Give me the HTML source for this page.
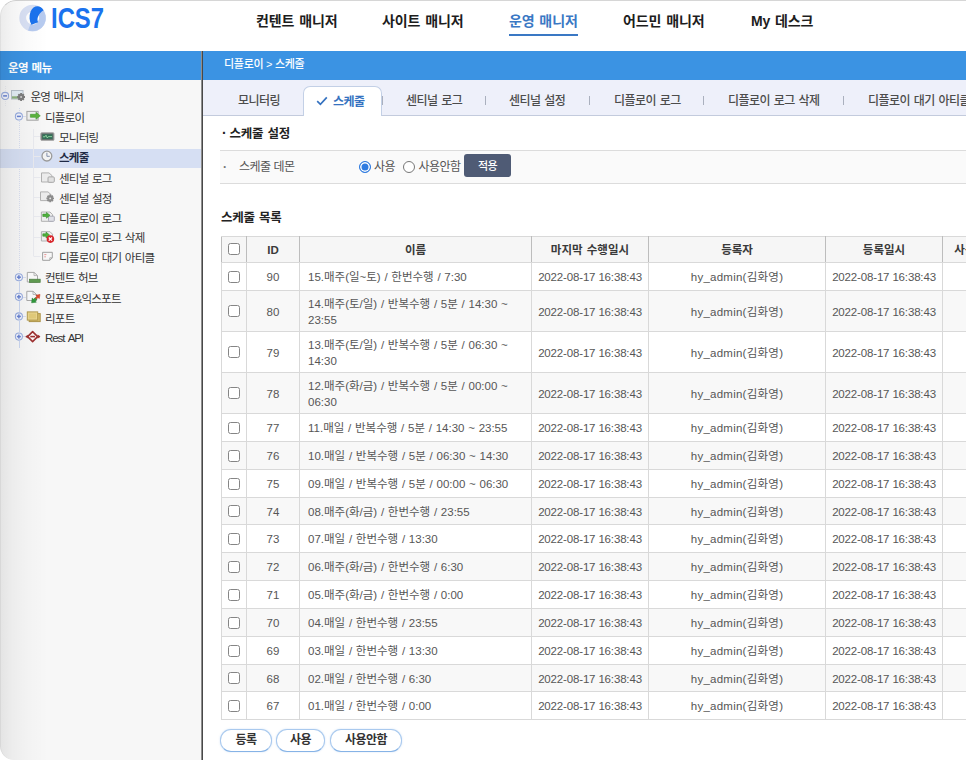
<!DOCTYPE html>
<html lang="ko">
<head>
<meta charset="utf-8">
<title>ICS7 운영 매니저 - 스케줄</title>
<style>
*{box-sizing:border-box}
html,body{margin:0;padding:0}
body{width:966px;height:760px;overflow:hidden;background:#fff;position:relative;
  font-family:"Liberation Sans","Noto Sans CJK KR",sans-serif;font-size:12px;color:#444}
.abs{position:absolute}
#frame{position:absolute;left:0;top:0;width:1100px;height:760px;overflow:hidden;
  border-radius:16px 0 0 14px;background:#fff}
#topline{left:0;top:0;width:1100px;height:760px;border:1px solid #d6d6d6;border-left-color:rgba(0,0,0,.05);border-bottom:none;border-right:none;border-radius:16px 0 0 14px;pointer-events:none}
/* header */
#hdr{left:0;top:0;width:1100px;height:51px;background:#fff}
#logotxt{left:51px;top:0;height:36px;line-height:35px;font-size:30px;font-weight:bold;color:#1b73ee;
  transform-origin:0 50%;transform:scaleX(.795);letter-spacing:0}
.nav{top:8px;height:26px;line-height:26px;font-size:14px;font-weight:bold;color:#1d1d1d;white-space:nowrap;letter-spacing:-.1px;word-spacing:1px}
.nav.on{color:#3a78c4}
#navline{left:509px;top:34px;width:69px;height:2px;background:#3a78c4}
/* blue bar */
#bar{left:0;top:51px;width:1100px;height:29px;background:#3b93e3}
#bar .t1{left:8px;top:2.5px;line-height:29px;color:#fff;font-weight:bold;font-size:11.5px;letter-spacing:-.6px;word-spacing:1px}
#bar .t2{left:224px;top:0;line-height:27px;color:#fff;font-size:11px;font-weight:500;letter-spacing:-.3px}
/* sidebar */
#side{left:0;top:80px;width:201px;height:680px;background:#f7f7f7}
#divider{left:201px;top:51px;width:2px;height:709px;background:linear-gradient(to right,#8e8e8e,#8e8e8e 50%,#484848 50%,#484848)}
#lgrad{left:0;top:0;width:48px;height:760px;background:linear-gradient(to right,rgba(0,0,0,.08),rgba(0,0,0,.045) 25%,rgba(0,0,0,.018) 55%,rgba(0,0,0,0));pointer-events:none}
.tr{position:absolute;left:0;width:201px;height:20px;line-height:20px;font-size:11.5px;color:#333;white-space:nowrap;letter-spacing:-.75px;word-spacing:1px}
.tr.sel{background:#d6dff3;font-weight:bold;color:#1f2a44}
.tr span.tx{position:absolute;top:0}
.ov{position:absolute;left:0;top:0}
.dl{position:absolute;width:1px;background:repeating-linear-gradient(to bottom,#dde1ec 0,#dde1ec 1px,transparent 1px,transparent 2px)}
.hl{position:absolute;height:1px;background:repeating-linear-gradient(to right,#dde1ec 0,#dde1ec 1px,transparent 1px,transparent 2px)}
/* content */
#tabs{left:203px;top:80px;width:900px;height:36px;background:#eef0fa;border-bottom:1px solid #c3cbdd}
.tab{position:absolute;top:90px;height:22px;line-height:22px;font-size:12px;font-weight:500;color:#4c4c4c;white-space:nowrap;letter-spacing:-.55px;word-spacing:1px}
.sep{position:absolute;top:96px;width:1px;height:9px;background:#aab0be}
#tabon{left:303px;top:86px;width:79px;height:30px;background:#fff;border:1px solid #c3d0e6;border-bottom:none;border-radius:7px 7px 0 0}
#tabon .t{position:absolute;left:29px;top:4px;line-height:22px;font-weight:bold;color:#3572c0;font-size:12px;letter-spacing:-.5px}
.h3{position:absolute;font-weight:bold;color:#222;font-size:12.5px;line-height:20px;white-space:nowrap;letter-spacing:-.25px;word-spacing:1px}
#form{left:220px;top:150px;width:800px;height:34px;background:#fafafa;border-top:1px solid #dcdcdc;border-bottom:1px solid #dcdcdc}
.radio{position:absolute;width:12px;height:12px;border-radius:50%;border:1px solid #777;background:#fff}
.radio.on{border:1.5px solid #2f7be0;background:#2f7be0;box-shadow:inset 0 0 0 1.5px #fff}
.lbl{position:absolute;line-height:20px;font-size:12px;color:#555;white-space:nowrap;letter-spacing:-.5px}
#apply{left:464px;top:154px;width:47px;height:23px;background:#4f5b75;border-radius:3px;color:#fff;font-size:11px;font-weight:500;line-height:25px;text-align:center;letter-spacing:-.5px}
/* table */
#tbl{position:absolute;left:221px;top:236px;border-collapse:collapse;table-layout:fixed;width:787px;font-size:11.5px;color:#565656;letter-spacing:0}
#tbl th,#tbl td{border:1px solid #d9d9d9;padding:1px 0 0 0;vertical-align:middle;overflow:hidden;line-height:16px}
#tbl td.u{letter-spacing:.25px}
#tbl{border:1px solid #bdbdbd}
#tbl th{font-weight:bold;color:#3a3a3a;text-align:center;background:#f6f6f6;height:26px;letter-spacing:0;word-spacing:1px}
#tbl td.d{letter-spacing:-.16px}
#tbl td.n2{padding-top:2px;line-height:16.5px}
#tbl th{border-left-color:#bdbdbd;border-right-color:#bdbdbd;padding-top:0}
#tbl td.c{text-align:center}
#tbl td.nm{text-align:left;padding-left:8px;line-height:16px;white-space:nowrap;word-spacing:.55px}
#tbl tr.alt td{background:#f8f8f8}
.cb{display:inline-block;width:12px;height:12px;border:1px solid #858585;border-radius:2.5px;background:#fff;vertical-align:middle;position:relative;top:-1px}
.btn{position:absolute;top:729px;height:23px;border:1px solid #a9c9ee;border-bottom-color:#86b3e6;border-radius:11px;background:#fff;
  font-weight:bold;font-size:12px;color:#333;text-align:center;line-height:21px;letter-spacing:-.5px;box-shadow:0 0 2px rgba(120,170,230,.35)}
</style>
</head>
<body>
<div id="frame">
  <div id="hdr" class="abs">
    <svg class="abs" style="left:0;top:0" width="60" height="40" viewBox="0 0 60 40">
      <circle cx="32.6" cy="18" r="9.9" fill="none" stroke="#d9e1f5" stroke-width="6.8"/>
      <path d="M41.15 7.81 A13.3 13.3 0 0 1 28.05 30.5 L30.38 24.11 A6.5 6.5 0 0 0 36.78 13.02 Z" fill="#b7cbf0"/>
      <path d="M43.6 10.2 C40.5 4.6 33.4 4.6 30.6 11.5 C28.9 16 29.3 21 31.4 24.7 L38.1 22.2 C36.4 18.6 38.4 13.6 43.6 10.2 Z" fill="#1b73ee"/>
    </svg>
    <div id="logotxt" class="abs">ICS7</div>
    <div class="nav abs" style="left:256px">컨텐트 매니저</div>
    <div class="nav abs" style="left:382px">사이트 매니저</div>
    <div class="nav abs on" style="left:509px">운영 매니저</div>
    <div class="nav abs" style="left:623px">어드민 매니저</div>
    <div class="nav abs" style="left:751px">My 데스크</div>
    <div id="navline" class="abs"></div>
  </div>
  <div id="bar" class="abs">
    <div class="t1 abs">운영 메뉴</div>
    <div class="t2 abs">디플로이 &gt; 스케줄</div>
  </div>

  <div id="side" class="abs">
    <div class="tr" style="top:7px"><span class="tx" style="left:30.5px">운영 매니저</span></div>
<div class="tr" style="top:28px"><span class="tx" style="left:45px">디플로이</span></div>
<div class="tr" style="top:48px"><span class="tx" style="left:59px">모니터링</span></div>
<div class="tr sel" style="top:69px;height:19px;line-height:19px"><span class="tx" style="left:59px">스케줄</span></div>
<div class="tr" style="top:89px"><span class="tx" style="left:59px">센티널 로그</span></div>
<div class="tr" style="top:109px"><span class="tx" style="left:59px">센티널 설정</span></div>
<div class="tr" style="top:129px"><span class="tx" style="left:59px">디플로이 로그</span></div>
<div class="tr" style="top:148px"><span class="tx" style="left:59px">디플로이 로그 삭제</span></div>
<div class="tr" style="top:168px"><span class="tx" style="left:59px">디플로이 대기 아티클</span></div>
<div class="tr" style="top:188px"><span class="tx" style="left:45px">컨텐트 허브</span></div>
<div class="tr" style="top:209px"><span class="tx" style="left:45px">임포트&amp;익스포트</span></div>
<div class="tr" style="top:229px"><span class="tx" style="left:45px">리포트</span></div>
<div class="tr" style="top:248px"><span class="tx" style="left:45px"><span style="letter-spacing:-1.1px;word-spacing:2px">Rest API</span></span></div>
<svg class="ov" width="201" height="280" viewBox="0 80 201 280"><path d="M5.5 86V91M5.5 101V106" stroke="#e9eaef" stroke-width="1" stroke-dasharray="1 1"/><path d="M19.5 108V112M19.5 121V272" stroke="#d9dff0" stroke-width="1" stroke-dasharray="1 1"/><path d="M19.5 281.5V292.5M19.5 301V312M19.5 321V332M19.5 341V348" stroke="#cbd7f0" stroke-width="1"/><path d="M33.5 129V256.5" stroke="#e9eaef" stroke-width="1"/><path d="M34 136.5H40.5" stroke="#e9eaef" stroke-width="1"/><path d="M34 156.5H40.5" stroke="#e9eaef" stroke-width="1"/><path d="M34 177.5H40.5" stroke="#e9eaef" stroke-width="1"/><path d="M34 197.5H40.5" stroke="#e9eaef" stroke-width="1"/><path d="M34 216.5H40.5" stroke="#e9eaef" stroke-width="1"/><path d="M34 237.5H40.5" stroke="#e9eaef" stroke-width="1"/><path d="M34 256.5H40.5" stroke="#e9eaef" stroke-width="1"/><path d="M23 116.5H26" stroke="#d9dff0" stroke-width="1"/><path d="M23 277.5H26" stroke="#d9dff0" stroke-width="1"/><path d="M23 297.5H26" stroke="#d9dff0" stroke-width="1"/><path d="M23 316.5H26" stroke="#d9dff0" stroke-width="1"/><path d="M23 336.5H26" stroke="#d9dff0" stroke-width="1"/><circle cx="5.1" cy="95.9" r="3.55" fill="#f3f5fd" stroke="#9aaee0" stroke-width="1.05"/><rect x="3.0999999999999996" y="95.15" width="4" height="1.5" fill="#6a84d3"/><circle cx="18.9" cy="116.4" r="3.55" fill="#f3f5fd" stroke="#9aaee0" stroke-width="1.05"/><rect x="16.9" y="115.65" width="4" height="1.5" fill="#6a84d3"/><circle cx="18.9" cy="277.2" r="3.55" fill="#f3f5fd" stroke="#9aaee0" stroke-width="1.05"/><rect x="16.9" y="276.45" width="4" height="1.5" fill="#6a84d3"/><rect x="18.15" y="275.2" width="1.5" height="4" fill="#6a84d3"/><circle cx="18.9" cy="296.8" r="3.55" fill="#f3f5fd" stroke="#9aaee0" stroke-width="1.05"/><rect x="16.9" y="296.05" width="4" height="1.5" fill="#6a84d3"/><rect x="18.15" y="294.8" width="1.5" height="4" fill="#6a84d3"/><circle cx="18.9" cy="316.4" r="3.55" fill="#f3f5fd" stroke="#9aaee0" stroke-width="1.05"/><rect x="16.9" y="315.65" width="4" height="1.5" fill="#6a84d3"/><rect x="18.15" y="314.4" width="1.5" height="4" fill="#6a84d3"/><circle cx="18.9" cy="336.6" r="3.55" fill="#f3f5fd" stroke="#9aaee0" stroke-width="1.05"/><rect x="16.9" y="335.85" width="4" height="1.5" fill="#6a84d3"/><rect x="18.15" y="334.6" width="1.5" height="4" fill="#6a84d3"/><rect x="11.5" y="90.5" width="11.5" height="8.5" fill="#e3edf5" stroke="#b7c0ca"/><rect x="12" y="96.3" width="10.5" height="2.3" fill="#8db27d"/><path d="M23.30 97.00L25.00 97.00M22.66 98.56L23.86 99.76M21.10 99.20L21.10 100.90M19.54 98.56L18.34 99.76M18.90 97.00L17.20 97.00M19.54 95.44L18.34 94.24M21.10 94.80L21.10 93.10M22.66 95.44L23.86 94.24" stroke="#7d7d7d" stroke-width="1.9" fill="none"/><circle cx="21.1" cy="97.0" r="3.0" fill="#7d7d7d"/><circle cx="21.1" cy="97.0" r="0.95" fill="#d9d9d9"/><rect x="26.9" y="111.4" width="11.2" height="8.8" fill="#f1f1f1" stroke="#a6a6a6"/><path d="M30.4 114.3H35.96V112.3L40.3 115.8L35.96 119.3V117.3H30.4Z" fill="#5db33f" stroke="#3f9a2f" stroke-width=".6" stroke-linejoin="round"/><rect x="40.8" y="132.7" width="13.2" height="7.8" rx="1" fill="#6c7370" stroke="#adadad"/><rect x="42.3" y="134.2" width="10.2" height="4.8" fill="#356f58"/><path d="M43 136.8H45L46 135.2L47.3 138L48.3 136.6H52" stroke="#9ae6aa" stroke-width=".8" fill="none"/><circle cx="46.9" cy="156.1" r="4.9" fill="#f3f3f3" stroke="#9b9b9b" stroke-width="1.3"/><path d="M46.9 152.7V156.3H49.8" stroke="#8390ab" stroke-width="1" fill="none"/><path d="M41.5 172.9H49L52 175.6V182H41.5Z" fill="#ececec" stroke="#b1b1b1"/><rect x="48" y="176.9" width="6.3" height="5.4" rx="1" fill="#e1e1e1" stroke="#a8a8a8"/><path d="M40.5 191.9H48L51 194.6V200.6H40.5Z" fill="#ececec" stroke="#b1b1b1"/><path d="M52.30 198.40L54.00 198.40M51.68 199.88L52.89 201.09M50.20 200.50L50.20 202.20M48.72 199.88L47.51 201.09M48.10 198.40L46.40 198.40M48.72 196.92L47.51 195.71M50.20 196.30L50.20 194.60M51.68 196.92L52.89 195.71" stroke="#8c8c8c" stroke-width="1.9" fill="none"/><circle cx="50.2" cy="198.4" r="2.9" fill="#8c8c8c"/><circle cx="50.2" cy="198.4" r="0.95" fill="#e6e6e6"/><path d="M41.4 212H50L52.5 214.6V221.3H41.4Z" fill="#efefef" stroke="#b1b1b1"/><rect x="48.5" y="216.2" width="5.8" height="5.1" rx=".8" fill="#e0e1e8" stroke="#a9aab6"/><path d="M42.8 214.10000000000002H46.40V212.4L50 215.3L46.40 218.20000000000002V216.5H42.8Z" fill="#4fb03c" stroke="#36902b" stroke-width=".6" stroke-linejoin="round"/><path d="M41.4 231.7H50L52.5 234.2V241H41.4Z" fill="#efefef" stroke="#b1b1b1"/><path d="M42.8 233.8H46.00V232.1L49.6 235L46.00 237.9V236.2H42.8Z" fill="#4fb03c" stroke="#36902b" stroke-width=".6" stroke-linejoin="round"/><circle cx="50.4" cy="239.1" r="3.8" fill="#d8252b"/><path d="M48.8 237.5L52 240.7M52 237.5L48.8 240.7" stroke="#fff" stroke-width="1.2"/><path d="M42.6 252.3H52.3V257.8L49.8 260.3H42.6Z" fill="#f7f7f7" stroke="#9f9f9f"/><path d="M52.3 257.8H49.8V260.3" fill="none" stroke="#9f9f9f" stroke-width=".8"/><path d="M44.3 254.6H46.4M44.3 256.8H45.9" stroke="#e89494" stroke-width="1"/><path d="M27.3 272.4H34L37.5 275.6V282H27.3Z" fill="#fbfbfb" stroke="#a9a9a9"/><path d="M34 272.4V275.6H37.5" fill="none" stroke="#a9a9a9" stroke-width=".8"/><rect x="29.5" y="279.2" width="10.7" height="3.2" fill="#609b51" stroke="#4b7e40" stroke-width=".7"/><path d="M26.8 291.3H33L36.5 294.5V300.5H26.8Z" fill="#f8fafc" stroke="#a9a9a9"/><path d="M33 291.3V294.5H36.5" fill="none" stroke="#a9a9a9" stroke-width=".8"/><path d="M35.2 297.6L37 299.4L35.3 301.1L36.4 302.2L31.6 302.8L32.2 298L33.5 299.3Z" fill="#2f9a3c" stroke="#237a2e" stroke-width=".5"/><path d="M35.4 298L37 296.4L35.8 295.2L40 294.4L39.3 298.7L38.1 297.5L36.5 299.1Z" fill="#e34a2d" stroke="#b9361f" stroke-width=".5"/><rect x="29.2" y="313.6" width="11" height="8" fill="#d5bc69" stroke="#ae954a"/><rect x="27.3" y="311.9" width="10.4" height="8.2" fill="#ead68f" stroke="#b49b4e"/><rect x="29" y="313.6" width="7" height="4.8" fill="#e2cb7a"/><path d="M25.8 336.6H40" stroke="#9d2f2f" stroke-width="1.4"/><path d="M32.6 331.6L37.6 336.6L32.6 341.6L27.6 336.6Z" fill="#fdf6f6" stroke="#9d2f2f" stroke-width="1.5" stroke-linejoin="round"/><path d="M30.3 336.6H35" stroke="#9d2f2f" stroke-width="1.6"/><path d="M37.6 334.4L40.4 336.6L37.6 338.8Z" fill="#9d2f2f"/><path d="M27.8 334.8L25.6 336.6L27.8 338.4Z" fill="#9d2f2f"/></svg>
  </div>
  <div id="divider" class="abs"></div>

  <div id="tabs" class="abs"></div>
  <div class="tab" style="left:238px">모니터링</div>
  <div id="tabon" class="abs">
    <svg class="abs" style="left:12px;top:9px" width="12" height="10" viewBox="0 0 12 10"><path d="M1.2 5.2 L4.4 8.3 L10.8 1.4" fill="none" stroke="#3572c0" stroke-width="1.7"/></svg>
    <div class="t">스케줄</div>
  </div>
  <div class="sep" style="left:382px"></div>
  <div class="tab" style="left:406px">센티널 로그</div>
  <div class="sep" style="left:485px"></div>
  <div class="tab" style="left:509px">센티널 설정</div>
  <div class="sep" style="left:589px"></div>
  <div class="tab" style="left:614px">디플로이 로그</div>
  <div class="sep" style="left:703px"></div>
  <div class="tab" style="left:728px">디플로이 로그 삭제</div>
  <div class="sep" style="left:843px"></div>
  <div class="tab" style="left:868px">디플로이 대기 아티클</div>

  <div class="h3" style="left:222px;top:123px"><span style="margin-right:3px;font-size:14px">·</span>스케줄 설정</div>
  <div id="form" class="abs"></div>
  <div class="lbl" style="left:223px;top:157px;color:#777;font-weight:bold">·</div>
  <div class="lbl" style="left:239px;top:157px">스케줄 데몬</div>
  <div class="radio on" style="left:359px;top:161px"></div>
  <div class="lbl" style="left:374px;top:157px">사용</div>
  <div class="radio" style="left:403px;top:161px"></div>
  <div class="lbl" style="left:418.5px;top:157px">사용안함</div>
  <div id="apply" class="abs">적용</div>

  <div class="h3" style="left:221px;top:208px">스케줄 목록</div>

  <table id="tbl">
    <colgroup><col style="width:25px"><col style="width:53px"><col style="width:232px"><col style="width:117px"><col style="width:177px"><col style="width:117px"><col style="width:66px"></colgroup>
    <tr><th><span class="cb"></span></th><th>ID</th><th>이름</th><th>마지막 수행일시</th><th>등록자</th><th>등록일시</th><th>사용여부</th></tr>
<tr style="height:28px"><td class="c"><span class="cb"></span></td><td class="c">90</td><td class="nm">15.매주(일~토) / 한번수행 / 7:30</td><td class="c d">2022-08-17 16:38:43</td><td class="c u">hy_admin(김화영)</td><td class="c d">2022-08-17 16:38:43</td><td class="c"></td></tr>
<tr class="alt" style="height:41px"><td class="c"><span class="cb"></span></td><td class="c">80</td><td class="nm n2">14.매주(토/일) / 반복수행 / 5분 / 14:30 ~<br>23:55</td><td class="c d">2022-08-17 16:38:43</td><td class="c u">hy_admin(김화영)</td><td class="c d">2022-08-17 16:38:43</td><td class="c"></td></tr>
<tr style="height:41px"><td class="c"><span class="cb"></span></td><td class="c">79</td><td class="nm n2">13.매주(토/일) / 반복수행 / 5분 / 06:30 ~<br>14:30</td><td class="c d">2022-08-17 16:38:43</td><td class="c u">hy_admin(김화영)</td><td class="c d">2022-08-17 16:38:43</td><td class="c"></td></tr>
<tr class="alt" style="height:41px"><td class="c"><span class="cb"></span></td><td class="c">78</td><td class="nm n2">12.매주(화/금) / 반복수행 / 5분 / 00:00 ~<br>06:30</td><td class="c d">2022-08-17 16:38:43</td><td class="c u">hy_admin(김화영)</td><td class="c d">2022-08-17 16:38:43</td><td class="c"></td></tr>
<tr style="height:28px"><td class="c"><span class="cb"></span></td><td class="c">77</td><td class="nm">11.매일 / 반복수행 / 5분 / 14:30 ~ 23:55</td><td class="c d">2022-08-17 16:38:43</td><td class="c u">hy_admin(김화영)</td><td class="c d">2022-08-17 16:38:43</td><td class="c"></td></tr>
<tr class="alt" style="height:28px"><td class="c"><span class="cb"></span></td><td class="c">76</td><td class="nm">10.매일 / 반복수행 / 5분 / 06:30 ~ 14:30</td><td class="c d">2022-08-17 16:38:43</td><td class="c u">hy_admin(김화영)</td><td class="c d">2022-08-17 16:38:43</td><td class="c"></td></tr>
<tr style="height:28px"><td class="c"><span class="cb"></span></td><td class="c">75</td><td class="nm">09.매일 / 반복수행 / 5분 / 00:00 ~ 06:30</td><td class="c d">2022-08-17 16:38:43</td><td class="c u">hy_admin(김화영)</td><td class="c d">2022-08-17 16:38:43</td><td class="c"></td></tr>
<tr class="alt" style="height:27px"><td class="c"><span class="cb"></span></td><td class="c">74</td><td class="nm">08.매주(화/금) / 한번수행 / 23:55</td><td class="c d">2022-08-17 16:38:43</td><td class="c u">hy_admin(김화영)</td><td class="c d">2022-08-17 16:38:43</td><td class="c"></td></tr>
<tr style="height:28px"><td class="c"><span class="cb"></span></td><td class="c">73</td><td class="nm">07.매일 / 한번수행 / 13:30</td><td class="c d">2022-08-17 16:38:43</td><td class="c u">hy_admin(김화영)</td><td class="c d">2022-08-17 16:38:43</td><td class="c"></td></tr>
<tr class="alt" style="height:28px"><td class="c"><span class="cb"></span></td><td class="c">72</td><td class="nm">06.매주(화/금) / 한번수행 / 6:30</td><td class="c d">2022-08-17 16:38:43</td><td class="c u">hy_admin(김화영)</td><td class="c d">2022-08-17 16:38:43</td><td class="c"></td></tr>
<tr style="height:28px"><td class="c"><span class="cb"></span></td><td class="c">71</td><td class="nm">05.매주(화/금) / 한번수행 / 0:00</td><td class="c d">2022-08-17 16:38:43</td><td class="c u">hy_admin(김화영)</td><td class="c d">2022-08-17 16:38:43</td><td class="c"></td></tr>
<tr class="alt" style="height:28px"><td class="c"><span class="cb"></span></td><td class="c">70</td><td class="nm">04.매일 / 한번수행 / 23:55</td><td class="c d">2022-08-17 16:38:43</td><td class="c u">hy_admin(김화영)</td><td class="c d">2022-08-17 16:38:43</td><td class="c"></td></tr>
<tr style="height:28px"><td class="c"><span class="cb"></span></td><td class="c">69</td><td class="nm">03.매일 / 한번수행 / 13:30</td><td class="c d">2022-08-17 16:38:43</td><td class="c u">hy_admin(김화영)</td><td class="c d">2022-08-17 16:38:43</td><td class="c"></td></tr>
<tr class="alt" style="height:27px"><td class="c"><span class="cb"></span></td><td class="c">68</td><td class="nm">02.매일 / 한번수행 / 6:30</td><td class="c d">2022-08-17 16:38:43</td><td class="c u">hy_admin(김화영)</td><td class="c d">2022-08-17 16:38:43</td><td class="c"></td></tr>
<tr style="height:28px"><td class="c"><span class="cb"></span></td><td class="c">67</td><td class="nm">01.매일 / 한번수행 / 0:00</td><td class="c d">2022-08-17 16:38:43</td><td class="c u">hy_admin(김화영)</td><td class="c d">2022-08-17 16:38:43</td><td class="c"></td></tr>
  </table>

  <div class="btn" style="left:220px;width:52px">등록</div>
  <div class="btn" style="left:276px;width:49px">사용</div>
  <div class="btn" style="left:330px;width:72px">사용안함</div>

  <div id="topline" class="abs"></div>
  <div id="lgrad" class="abs"></div>
</div>
</body>
</html>
